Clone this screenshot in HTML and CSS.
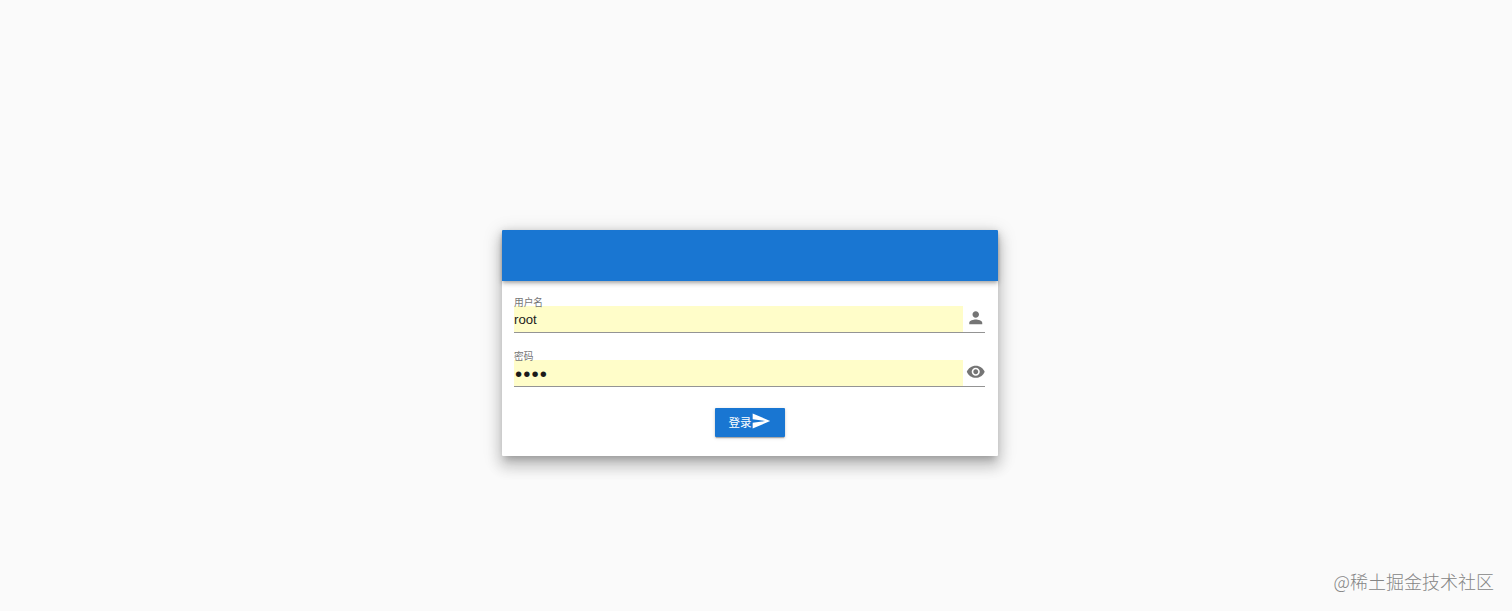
FILE: index.html
```
<!DOCTYPE html>
<html lang="zh">
<head>
    <meta charset="UTF-8">
    <meta name="viewport" content="width=device-width, initial-scale=1.0">
    <title>登录</title>
    <link rel="stylesheet" href="styles.css">
</head>
<body>
    <div class="card">
        <div class="toolbar"></div>
        <form action="" class="form">
            <div class="field">
                <label for="username">用户名</label>
                <div class="slot">
                    <input type="text" id="username" value="root">
                    <svg class="icon" viewBox="0 0 24 24"><path d="M12 12c2.21 0 4-1.79 4-4s-1.79-4-4-4-4 1.79-4 4 1.79 4 4 4zm0 2c-2.67 0-8 1.34-8 4v2h16v-2c0-2.66-5.33-4-8-4z"/></svg>
                </div>
            </div>
            <div class="field">
                <label for="password">密码</label>
                <div class="slot">
                    <input type="password" id="password" class="password" value="root">
                    <svg class="icon" viewBox="0 0 24 24"><path d="M12 4.5C7 4.5 2.73 7.61 1 12c1.73 4.39 6 7.5 11 7.5s9.27-3.11 11-7.5c-1.73-4.39-6-7.5-11-7.5zM12 17c-2.76 0-5-2.24-5-5s2.24-5 5-5 5 2.24 5 5-2.24 5-5 5zm0-8c-1.66 0-3 1.34-3 3s1.34 3 3 3 3-1.34 3-3-1.34-3-3-3z"/></svg>
                </div>
            </div>
            <button type="button" class="login">登录<svg class="send" viewBox="0 0 24 24"><path d="M2 21L23 12 2 3v7l15 2-15 2z"/></svg></button>
        </form>
    </div>
    <div class="watermark">@稀土掘金技术社区</div>
</body>
</html>
```
FILE: styles.css
```
*{
    margin: 0;
    padding: 0;
    box-sizing: border-box;
}
body{
    height: 611px;
    overflow: hidden;
    padding: 230px 13px 0 0;
    background-color: #fafafa;
    font-family: "Liberation Sans", "Noto Sans CJK SC", sans-serif;
}
.card{
    width: 496px;
    height: 226px;
    margin: 0 auto;
    background-color: #ffffff;
    border-radius: 1px;
    box-shadow: 0 6px 7px -3px rgba(0,0,0,.2), 0 10px 14px 2px rgba(0,0,0,.14), 0 4px 18px 3px rgba(0,0,0,.12);
}
.toolbar{
    height: 51px;
    background-color: #1976d2;
    border-radius: 1px 1px 0 0;
    box-shadow: 0 2px 3px -1px rgba(0,0,0,.2), 0 3px 4px rgba(0,0,0,.14), 0 1px 8px rgba(0,0,0,.12);
}
.form{
    display: flex;
    flex-direction: column;
    align-items: center;
    padding: 15px 12.5px 0;
}
.field{
    width: 100%;
    height: 54px;
}
/* the label overlaps the filled input a little */
.field label{
    display: block;
    position: relative;
    z-index: 1;
    height: 10px;
    line-height: 14px;
    font-size: 9.7px;
    color: #757575;
}
.slot{
    display: flex;
    height: 27px;
    border-bottom: 1px solid #949494;
}
.slot input{
    width: 449px;
    height: 26px;
    border: none;
    outline: none;
    background-color: #fffdc9;
    font-family: "Liberation Sans", sans-serif;
    font-size: 13.2px;
    color: #212121;
}
.slot .password{
    padding: 2px 0 0 1px;
    font-size: 20.5px;
    letter-spacing: 1.1px;
    color: #1a1a1a;
}
.icon{
    width: 19.5px;
    height: 19.5px;
    margin: 2px 0 0 2.5px;
    fill: #757575;
}
.login{
    display: flex;
    align-items: center;
    justify-content: center;
    width: 70px;
    height: 29px;
    margin-top: 4px;
    padding-bottom: 2px;
    border: none;
    border-radius: 1px;
    background-color: #1976d2;
    color: #ffffff;
    font-family: "Liberation Sans", "Noto Sans CJK SC", sans-serif;
    font-size: 11.5px;
    font-weight: 400;
    box-shadow: 0 2px 1px -1px rgba(0,0,0,.2), 0 1px 2px rgba(0,0,0,.14), 0 1px 4px rgba(0,0,0,.12);
}
.send{
    width: 20px;
    height: 20px;
    margin: -1px 0 0 -1px;
    fill: #ffffff;
}
.watermark{
    position: absolute;
    right: 18px;
    bottom: 17px;
    line-height: 26px;
    font-family: "Noto Sans CJK SC", sans-serif;
    font-size: 18px;
    font-weight: 300;
    color: #858585;
}
```
